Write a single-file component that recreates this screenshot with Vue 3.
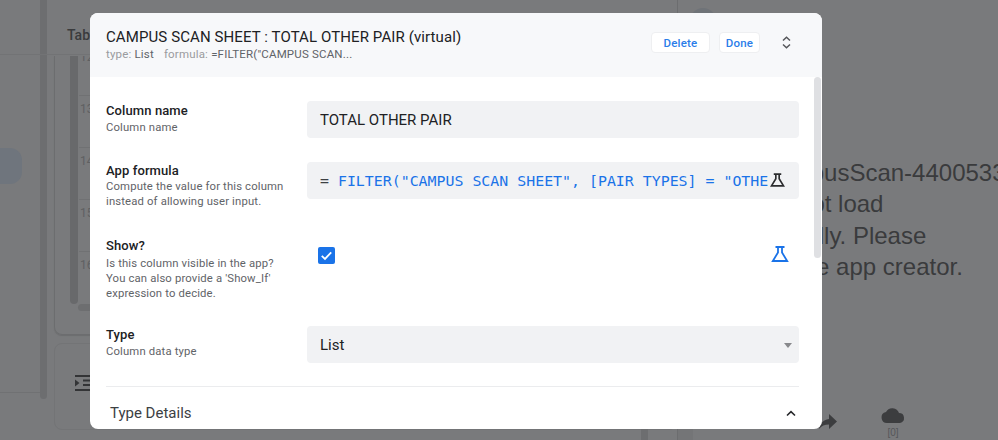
<script setup>
const rows = [12, 13, 14, 15, 16]
</script>

<template>
  <div class="page">
    <aside class="nav">
      <div class="nav-pill"></div>
      <div class="nav-foot"></div>
      <div class="nav-scroll"></div>
    </aside>

    <section class="middle">
      <div class="tab-head">Table</div>
      <div class="table-card">
        <div class="v-scroll"></div>
        <div class="num-col">
          <div v-for="r in rows" :key="r" class="num">{{ r }}</div>
        </div>
        <div class="h-scroll"></div>
      </div>
      <div class="tool-card">
        <svg class="indent" viewBox="0 0 18 18" width="18" height="18">
          <path d="M1 1h17v2H1zM9 5.500h9v2H9zM9 10h9v2H9zM1 15h17v2H1z" fill="#333436" />
          <path d="M1 5.500 5.500 9 1 12.500z" fill="#333436" />
        </svg>
      </div>
    </section>

    <section class="preview">
      <div class="avatar"></div>
      <div class="divider"></div>
      <div class="bar-a"></div>
      <div class="bar-b"></div>
      <div class="message">
        <div>The CampusScan-4400533</div>
        <div class="l2">It could not load</div>
        <div>successfully. Please</div>
        <div>contact the app creator.</div>
      </div>
      <svg class="forward" viewBox="0 0 20 16" width="20" height="16">
        <path d="M11 0l8 7.500-8 7.500v-4.400C6.600 10.600 3.500 12 1 15c.8-5 3.800-9 10-10z" fill="#3c3d3f" />
      </svg>
      <div class="sync">
        <svg viewBox="0 0 24 16" width="24" height="16">
          <path d="M6 16a5.500 5.500 0 0 1-1-10.900A7 7 0 0 1 18 6.100 5 5 0 0 1 19 16z" fill="#3c3d3f" />
        </svg>
        <span>[0]</span>
      </div>
    </section>

    <div class="modal">
      <header class="modal-head">
        <div class="head-text">
          <h1>CAMPUS SCAN SHEET : TOTAL OTHER PAIR (virtual)</h1>
          <p>
            <span class="faint">type:</span> <span class="val">List</span>
            <span class="faint formula">formula:</span> <span class="val">=FILTER("CAMPUS SCAN...</span>
          </p>
        </div>
        <button class="btn delete">Delete</button>
        <button class="btn done">Done</button>
        <svg class="unfold" viewBox="0 0 9 13" width="9" height="13">
          <path d="M1 4.500 4.500 1.300 8 4.500M1 8.500l3.500 3.200L8 8.500" fill="none" stroke="#55565a" stroke-width="1.500" />
        </svg>
      </header>

      <div class="modal-body">
        <div class="field f-name">
          <div class="label">
            <h2>Column name</h2>
            <p>Column name</p>
          </div>
          <div class="input">TOTAL OTHER PAIR</div>
        </div>

        <div class="field f-formula">
          <div class="label">
            <h2>App formula</h2>
            <p>Compute the value for this column<br />instead of allowing user input.</p>
          </div>
          <div class="input code">
            <span class="code-text"><span class="eq">=</span> FILTER("CAMPUS SCAN SHEET", [PAIR TYPES] = "OTHE</span>
            <svg class="flask" viewBox="0 0 18 16" width="15" height="14">
              <path d="M4.500 1h9M7 1v5.500L1.800 15h14.400L11 6.500V1" fill="none" stroke="#2b2c2e" stroke-width="2" />
            </svg>
          </div>
        </div>

        <div class="field f-show">
          <div class="label">
            <h2>Show?</h2>
            <p>Is this column visible in the app?<br />You can also provide a 'Show_If'<br />expression to decide.</p>
          </div>
          <div class="show-ctl">
            <span class="check">
              <svg viewBox="0 0 18 18" width="18" height="18">
                <path d="M4 9.300 7.400 12.600 14 5.600" fill="none" stroke="#fff" stroke-width="1.900" />
              </svg>
            </span>
            <svg class="flask-blue" viewBox="0 0 18 16" width="18" height="16">
              <path d="M4.500 1h9M7 1v5.500L1.800 15h14.400L11 6.500V1" fill="none" stroke="#1a73e8" stroke-width="1.800" />
            </svg>
          </div>
        </div>

        <div class="field f-type">
          <div class="label">
            <h2>Type</h2>
            <p>Column data type</p>
          </div>
          <div class="input select">
            List
            <span class="caret"></span>
          </div>
        </div>

        <div class="rule"></div>

        <div class="section-head">
          <span>Type Details</span>
          <svg viewBox="0 0 10 7" width="10" height="7">
            <path d="M1 5.500 5 1.700 9 5.500" fill="none" stroke="#26272a" stroke-width="1.600" />
          </svg>
        </div>
      </div>

      <div class="thumb"></div>
    </div>
  </div>
</template>

<style scoped>
.page {
  position: relative;
  width: 998px;
  height: 440px;
  overflow: hidden;
  background: #797a7c;
  display: flex;
  font-family: Roboto, "Liberation Sans", sans-serif;
}

/* dimmed background */
.nav {
  position: relative;
  width: 54px;
  flex: none;
}
.nav-pill {
  position: absolute;
  left: -20px;
  top: 148px;
  width: 42px;
  height: 36px;
  border-radius: 12px;
  background: #6f757d;
}
.nav-foot {
  position: absolute;
  left: 0;
  top: 392px;
  width: 40px;
  height: 1px;
  background: #707173;
}
.nav-scroll {
  position: absolute;
  left: 40px;
  top: -6px;
  width: 7px;
  height: 405px;
  border-radius: 4px;
  background: #6d6e70;
}
.middle {
  width: 623px;
  flex: none;
  display: flex;
  flex-direction: column;
  position: relative;
}
.middle::before {
  content: "";
  position: absolute;
  left: -54px;
  top: 54px;
  width: 677px;
  height: 1px;
  background: #727375;
}
.tab-head {
  height: 56px;
  padding: 27px 0 0 13px;
  box-sizing: border-box;
  font-size: 14px;
  font-weight: 500;
  color: #3a3b3d;
  line-height: 16px;
}
.table-card {
  position: relative;
  height: 279px;
  box-sizing: border-box;
  border: 1px solid #6c6d6f;
  border-top: 0;
  border-radius: 0 0 8px 8px;
  box-shadow: 0 1px 1px #6c6d6f;
  overflow: hidden;
}
.v-scroll {
  position: absolute;
  left: 15px;
  top: 0;
  width: 8px;
  height: 248px;
  border-radius: 0 0 4px 4px;
  background: #68696b;
}
.h-scroll {
  position: absolute;
  left: 23px;
  top: 248px;
  width: 60px;
  height: 7px;
  border-radius: 4px;
  background: #6d6e70;
}
.num-col {
  margin-left: 24px;
  margin-top: -12px;
}
.num {
  height: 52px;
  box-sizing: border-box;
  border-bottom: 1px solid #707173;
  font-size: 12px;
  color: #5f6062;
  padding: 5px 0 0 1px;
  line-height: 16px;
}
.num:last-child {
  border-bottom: 0;
}
.tool-card {
  margin-top: 8px;
  height: 87px;
  box-sizing: border-box;
  border: 1px solid #737476;
  border-radius: 8px;
  padding: 30px 0 0 19px;
}
.indent {
  display: block;
}
.preview {
  flex: 1;
  position: relative;
}
.avatar {
  position: absolute;
  left: 13px;
  top: 8px;
  width: 26px;
  height: 26px;
  border-radius: 50%;
  background: #6f7378;
}
.divider {
  position: absolute;
  left: 0;
  top: 0;
  width: 1px;
  height: 440px;
  background: #6c6d6f;
}
.bar-a {
  position: absolute;
  left: -36px;
  top: 420px;
  width: 7px;
  height: 20px;
  background: #6d6e70;
}
.bar-b {
  position: absolute;
  left: 1px;
  top: 420px;
  width: 15px;
  height: 20px;
  background: #747577;
}
.message {
  position: absolute;
  left: 35px;
  top: 157px;
  white-space: nowrap;
  font-family: "Liberation Sans", Arial, sans-serif;
  font-size: 24px;
  line-height: 31.300px;
  color: #3a3b3d;
}
.l2 {
  margin-left: 2px;
}
.forward {
  position: absolute;
  left: 141px;
  top: 414px;
}
.sync {
  position: absolute;
  left: 204px;
  top: 407px;
  width: 24px;
  display: flex;
  flex-direction: column;
  align-items: center;
  font-family: "Liberation Sans", Arial, sans-serif;
  font-size: 10px;
  line-height: 12px;
  color: #55565a;
}
.sync svg {
  display: block;
  margin-bottom: 4px;
}

/* dialog */
.modal {
  position: absolute;
  left: 90px;
  top: 13px;
  width: 732px;
  height: 416px;
  background: #fff;
  border-radius: 8px;
  overflow: hidden;
  display: flex;
  flex-direction: column;
}
.modal-head {
  flex: none;
  height: 64px;
  box-sizing: border-box;
  background: #f7f8fa;
  display: flex;
  align-items: flex-start;
  padding: 19px 0 0 16px;
}
.head-text {
  width: 545px;
  margin-top: -5px;
}
.head-text h1 {
  margin: 0;
  font-size: 15px;
  font-weight: 400;
  line-height: 20px;
  letter-spacing: 0.100px;
  color: #202124;
  white-space: nowrap;
}
.head-text p {
  margin: 0;
  font-size: 11.500px;
  line-height: 14px;
  letter-spacing: 0.180px;
  white-space: nowrap;
}
.faint {
  color: #9a9b9e;
}
.val {
  color: #5f6368;
}
.formula {
  margin-left: 10px;
}
.btn {
  height: 21px;
  box-sizing: border-box;
  padding: 0;
  background: #fff;
  border: 1px solid #eeeff1;
  border-radius: 4px;
  font-family: Roboto, "Liberation Sans", sans-serif;
  font-size: 11.500px;
  font-weight: 500;
  letter-spacing: 0.200px;
  color: #2a7de9;
}
.delete {
  width: 59px;
}
.done {
  width: 41px;
  margin-left: 9px;
}
.unfold {
  margin: 4px 0 0 22px;
}
.modal-body {
  flex: 1;
  padding: 0 23px 0 16px;
  display: flex;
  flex-direction: column;
}
.field {
  display: flex;
  align-items: flex-start;
}
.label {
  width: 201px;
  flex: none;
  padding-top: 1px;
}
.label h2 {
  margin: 0;
  font-size: 13px;
  font-weight: 500;
  line-height: 17px;
  letter-spacing: 0.100px;
  color: #202124;
}
.label p {
  margin: 0;
  font-size: 11.300px;
  line-height: 15px;
  letter-spacing: 0.150px;
  color: #5f6368;
}
.f-name .label p,
.f-type .label p {
  margin-top: 1px;
}
.f-show .label p {
  margin-top: 1.500px;
}
.input {
  flex: 1;
  height: 37px;
  box-sizing: border-box;
  background: #f1f2f4;
  border-radius: 4px;
  padding: 0 13px;
  display: flex;
  align-items: center;
  font-size: 15px;
  color: #202124;
  position: relative;
}
.f-name {
  margin-top: 24px;
}
.f-formula {
  margin-top: 24px;
  height: 37px;
}
.f-formula .label,
.f-type .label {
  padding-top: 0;
}
.code {
  font-family: "DejaVu Sans Mono", "Liberation Mono", monospace;
  font-size: 14.900px;
  color: #1a73e8;
  overflow: hidden;
}
.eq {
  color: #3c4043;
}
.code-text {
  display: block;
  width: 449px;
  flex: none;
  overflow: hidden;
  white-space: nowrap;
}
.flask {
  position: absolute;
  right: 14px;
  top: 11px;
}
.f-show {
  margin-top: 37px;
  height: 90px;
}
.show-ctl {
  flex: 1;
  display: flex;
  align-items: flex-start;
  justify-content: space-between;
  padding: 11px 10px 0 11px;
}
.check {
  display: block;
  width: 17px;
  height: 17px;
  border-radius: 2px;
  background: #1a73e8;
}
.check svg {
  display: block;
  width: 17px;
  height: 17px;
}
.flask-blue {
  display: block;
  margin-top: -1px;
}
.select {
  justify-content: flex-start;
}
.caret {
  position: absolute;
  right: 7px;
  top: 17px;
  width: 0;
  height: 0;
  border-left: 4.500px solid transparent;
  border-right: 4.500px solid transparent;
  border-top: 5px solid #88898c;
}
.rule {
  height: 1px;
  margin-top: 23px;
  background: #ebecee;
  flex: none;
}
.section-head {
  margin-top: 17px;
  padding: 0 3px 0 4px;
  display: flex;
  align-items: center;
  justify-content: space-between;
  font-size: 15px;
  line-height: 18px;
  color: #3c4043;
}
.thumb {
  position: absolute;
  left: 724px;
  top: 64px;
  width: 7px;
  height: 181px;
  border-radius: 4px;
  background: #dfe0e3;
}
</style>

<style>
html, body {
  margin: 0;
  overflow: hidden;
}
</style>
